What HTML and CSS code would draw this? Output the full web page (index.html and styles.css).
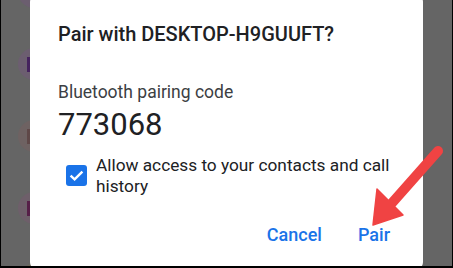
FILE: index.html
```html
<!DOCTYPE html>
<html>
<head>
<meta charset="utf-8">
<link rel="stylesheet" href="styles.css">
</head>
<body>
<div class="frame">
  <div class="list">
    <div class="avatar a1"><i class="glyph"></i></div>
    <div class="avatar a2"><i class="glyph"></i></div>
    <div class="avatar a3"><i class="glyph"></i></div>
    <div class="avatar a4"><i class="glyph"></i></div>
    <div class="avatar a5"><i class="glyph"></i></div>
  </div>
  <div class="dialog">
    <h1 class="title">Pair with DESKTOP-H9GUUFT?</h1>
    <div class="label">Bluetooth pairing code</div>
    <div class="code">773068</div>
    <div class="check-row">
      <span class="checkbox">
        <svg viewBox="0 0 21 21" width="21" height="21"><path d="M4.6 10.6 L8.6 14.4 L16.4 6.6" fill="none" stroke="#fff" stroke-width="2.4"/></svg>
      </span>
      <span class="check-label">Allow access to your contacts and call history</span>
    </div>
    <div class="actions">
      <span class="btn">Cancel</span>
      <span class="btn">Pair</span>
    </div>
  </div>
  <svg class="arrow" viewBox="0 0 453 268" width="453" height="268">
    <line x1="438" y1="151" x2="392" y2="203" stroke="#f04343" stroke-width="10" stroke-linecap="round"/>
    <polygon points="373,225 377,189 403,215" fill="#f04343" stroke="#f04343" stroke-width="1.5" stroke-linejoin="round"/>
  </svg>
</div>
</body>
</html>
```

FILE: styles.css
```css
html, body {
  margin: 0;
  padding: 0;
}
body {
  width: 453px;
  height: 268px;
  overflow: hidden;
  font-family: Roboto, "Noto Sans", sans-serif;
}
.frame {
  position: relative;
  box-sizing: border-box;
  width: 453px;
  height: 268px;
  background: #656565;
  border-left: 1px solid #000;
  border-right: 1px solid #000;
  border-bottom: 2px solid #000;
  overflow: hidden;
}
.list {
  display: flex;
  flex-direction: column;
  gap: 40px;
  padding-left: 17px;
  margin-top: -24px;
}
.avatar {
  width: 32px;
  height: 32px;
  border-radius: 50%;
  flex: none;
  display: flex;
  align-items: center;
  padding-left: 9px;
  box-sizing: border-box;
}
.glyph {
  display: block;
  width: 3px;
  height: 15px;
  border-bottom: 2px solid currentColor;
  background: currentColor;
  box-sizing: border-box;
}
.a1 { background: #6b5e6f; color: #48305a; }
.a2 { background: #6c5e70; color: #45225e; }
.a3 { background: #6e6262; color: #5f4848; }
.a4 { background: #6e5f6a; color: #561f48; }
.a5 { background: #6d6a58; color: #5b5530; }

.dialog {
  position: absolute;
  left: 29px;
  top: -6px;
  width: 393px;
  height: 276px;
  box-sizing: border-box;
  background: #fff;
  border-radius: 8px;
  padding: 28px 28px 0 28px;
  display: flex;
  flex-direction: column;
}
.title {
  margin: 0;
  font-size: 20px;
  line-height: 24px;
  font-weight: 500;
  color: #202124;
}
.label {
  margin-top: 34px;
  font-size: 17.5px;
  line-height: 24px;
  color: #3c4043;
}
.code {
  margin-top: 1px;
  font-size: 31px;
  line-height: 40px;
  color: #202124;
}
.check-row {
  margin-top: 10px;
  display: flex;
  align-items: flex-start;
  gap: 9px;
  padding-left: 8px;
}
.checkbox {
  flex: none;
  width: 21px;
  height: 21px;
  margin-top: 10px;
  background: #1a73e8;
  border-radius: 3px;
  display: flex;
}
.check-label {
  font-size: 17.25px;
  line-height: 21px;
  color: #202124;
}
.actions {
  margin-top: auto;
  margin-bottom: 23px;
  display: flex;
  justify-content: flex-end;
  gap: 36px;
  padding-right: 5px;
}
.btn {
  font-size: 18px;
  line-height: 24px;
  font-weight: 500;
  color: #1a73e8;
}
.arrow {
  position: absolute;
  left: -1px;
  top: 0;
}
```
